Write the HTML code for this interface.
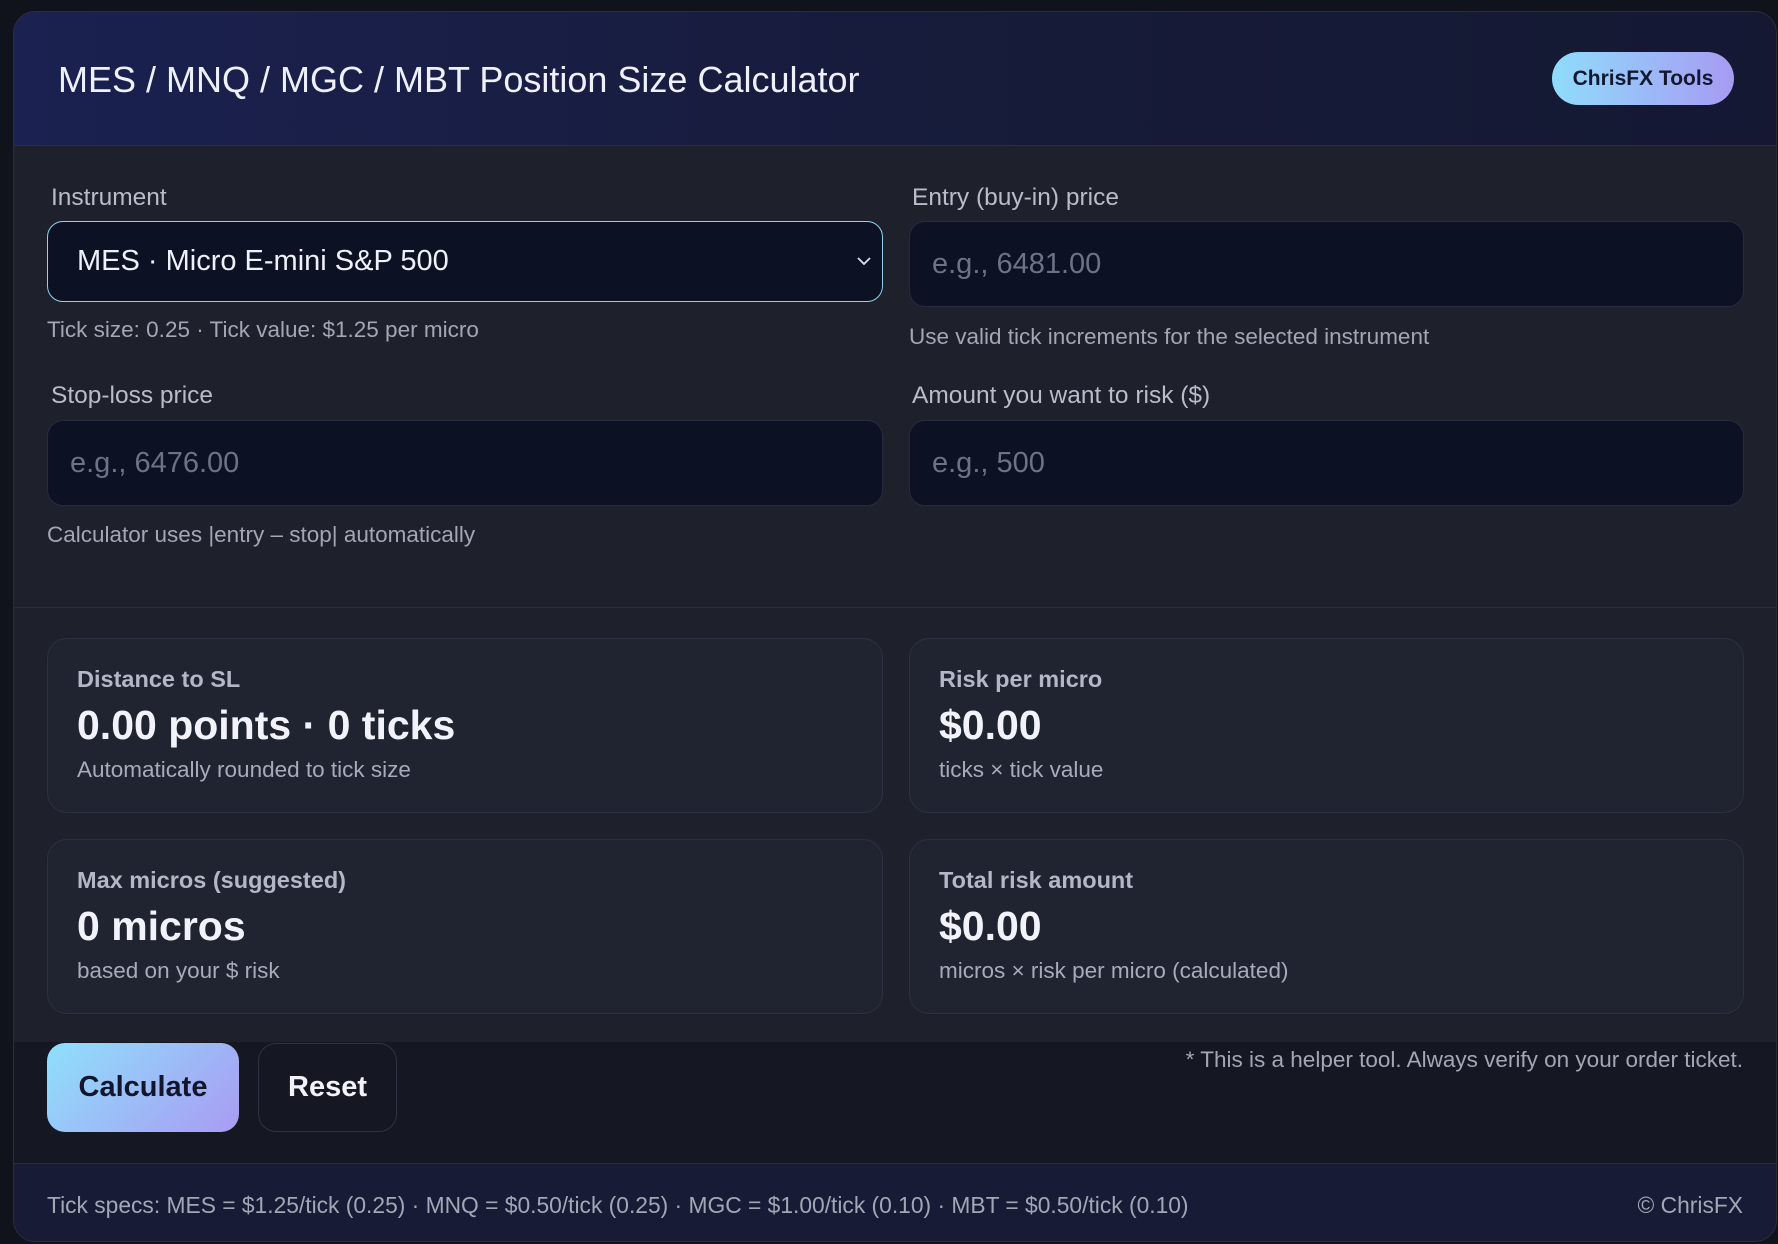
<!DOCTYPE html>
<html><head><meta charset="utf-8"><style>
*{box-sizing:border-box;margin:0;padding:0}
body{width:1778px;height:1244px;background:#11131c;font-family:"Liberation Sans",sans-serif;position:relative;overflow:hidden}
.card{position:absolute;left:13px;top:11px;width:1764px;height:1231px;border-radius:22px;background:#1e202c;overflow:hidden;border:1px solid #2a2e3c}
.hdr{position:absolute;left:0;top:0;width:100%;height:134px;background:linear-gradient(90deg,#1b2150,#161b38 60%,#141833);border-bottom:1px solid #2a2e40}
.a{position:absolute;white-space:nowrap}
.title{left:44px;top:47px;font-size:36px;color:#eef0fa}
.pill{left:1538px;top:40px;width:182px;height:53px;border-radius:27px;background:linear-gradient(90deg,#8fdcfb,#a79bf3);color:#121830;font-weight:bold;font-size:21px;text-align:center;line-height:53px}
.lbl{font-size:24.5px;color:#b9bcc9}
.help{font-size:22.5px;color:#a3a7b5}
.inp{position:absolute;background:#0d1124;border:1px solid #262b3f;border-radius:16px;font-size:29px;color:#6d7285;padding-left:22px;display:flex;align-items:center}
.sel{border:1.5px solid #8fd3ea;color:#eef0fa;padding-left:29px}
.box{position:absolute;border:1px solid #2c3040;border-radius:20px;background:#202330}
.box .l{position:absolute;left:29px;top:27px;font-size:23.5px;color:#b4b8c6;font-weight:bold}
.box .v{position:absolute;left:29px;top:63px;font-size:41px;color:#f2f3fa;font-weight:bold}
.box .s{position:absolute;left:29px;top:118px;font-size:22.5px;color:#a7abba}
.act{position:absolute;left:0;top:1030px;width:100%;height:122px;background:#151823}
.foot{position:absolute;left:0;top:1151px;width:100%;height:80px;background:#181b36;border-top:1px solid #262a44}
</style></head><body>
<div class="card">
<div class="hdr"></div>
<div class="a title">MES / MNQ / MGC / MBT Position Size Calculator</div>
<div class="a pill">ChrisFX Tools</div>

<div class="a lbl" style="left:37px;top:172px">Instrument</div>
<div class="inp sel" style="left:33px;top:209px;width:836px;height:81px">MES · Micro E-mini S&amp;P 500
<svg style="position:absolute;right:10px;top:33px" width="16" height="12" viewBox="0 0 16 12"><path d="M2 3l6 6 6-6" stroke="#dfe3ee" stroke-width="1.8" fill="none"/></svg></div>
<div class="a help" style="left:33px;top:305px">Tick size: 0.25 · Tick value: $1.25 per micro</div>

<div class="a lbl" style="left:898px;top:172px">Entry (buy-in) price</div>
<div class="inp" style="left:895px;top:209px;width:835px;height:86px">e.g., 6481.00</div>
<div class="a help" style="left:895px;top:312px">Use valid tick increments for the selected instrument</div>

<div class="a lbl" style="left:37px;top:370px">Stop-loss price</div>
<div class="inp" style="left:33px;top:408px;width:836px;height:86px">e.g., 6476.00</div>
<div class="a help" style="left:33px;top:510px">Calculator uses |entry – stop| automatically</div>

<div class="a lbl" style="left:898px;top:370px">Amount you want to risk ($)</div>
<div class="inp" style="left:895px;top:408px;width:835px;height:86px">e.g., 500</div>

<div class="a" style="left:0;top:595px;width:100%;height:1px;background:#2a2e3c"></div>

<div class="box" style="left:33px;top:626px;width:836px;height:175px"><div class="l">Distance to SL</div><div class="v">0.00 points · 0 ticks</div><div class="s">Automatically rounded to tick size</div></div>
<div class="box" style="left:895px;top:626px;width:835px;height:175px"><div class="l">Risk per micro</div><div class="v">$0.00</div><div class="s">ticks × tick value</div></div>
<div class="box" style="left:33px;top:827px;width:836px;height:175px"><div class="l">Max micros (suggested)</div><div class="v">0 micros</div><div class="s">based on your $ risk</div></div>
<div class="box" style="left:895px;top:827px;width:835px;height:175px"><div class="l">Total risk amount</div><div class="v">$0.00</div><div class="s">micros × risk per micro (calculated)</div></div>

<div class="act"></div>
<div class="a" style="left:33px;top:1031px;width:192px;height:89px;border-radius:18px;background:linear-gradient(135deg,#8fe0fb,#a99bf3);color:#11162c;font-weight:bold;font-size:29px;text-align:center;line-height:89px">Calculate</div>
<div class="a" style="left:244px;top:1031px;width:139px;height:89px;border-radius:18px;border:1px solid #2e3242;color:#f2f3fa;font-weight:bold;font-size:29px;text-align:center;line-height:87px">Reset</div>
<div class="a help" style="right:33px;top:1035px;font-size:22.5px">* This is a helper tool. Always verify on your order ticket.</div>

<div class="foot"></div>
<div class="a help" style="left:33px;top:1180px;font-size:22.8px">Tick specs: MES = $1.25/tick (0.25) · MNQ = $0.50/tick (0.25) · MGC = $1.00/tick (0.10) · MBT = $0.50/tick (0.10)</div>
<div class="a help" style="right:33px;top:1180px;font-size:22.8px">© ChrisFX</div>
</div>
</body></html>
